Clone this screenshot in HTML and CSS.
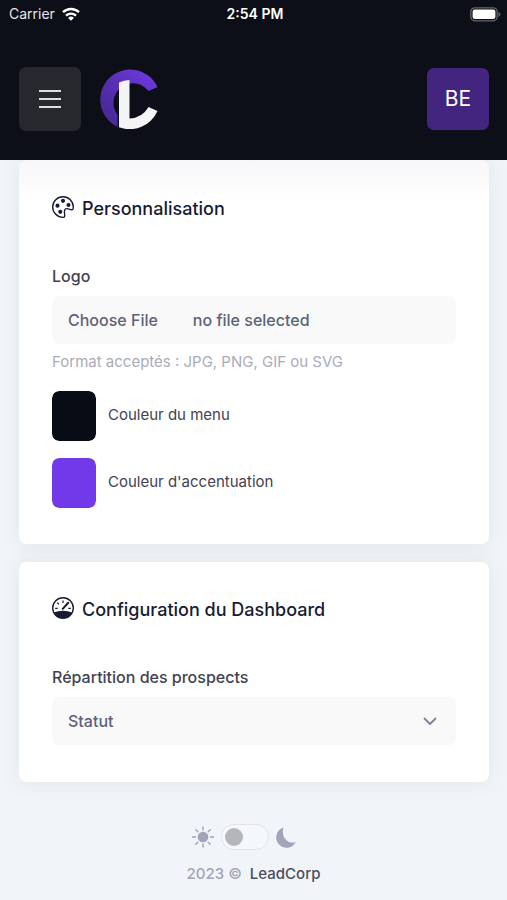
FILE: index.html
```html
<!DOCTYPE html>
<html lang="fr">
<head>
<meta charset="utf-8">
<meta name="viewport" content="width=device-width, initial-scale=1">
<title>LeadCorp</title>
<link rel="stylesheet" href="styles.css">
</head>
<body>
<header class="header">
  <div class="status">
    <div class="carrier">
      <span>Carrier</span>
      <svg class="wifi" viewBox="0 0 18 14" aria-hidden="true"><g fill="none" stroke="currentColor" stroke-width="2.4"><path d="M1 5.2a11.5 11.5 0 0 1 16 0"/><path d="M4 8.6a7.2 7.2 0 0 1 10 0"/></g><path fill="currentColor" d="M9 13.8 6.1 10.9a4.1 4.1 0 0 1 5.8 0z"/></svg>
    </div>
    <time class="clock">2:54 PM</time>
    <svg class="battery" viewBox="0 0 31 15" aria-hidden="true"><rect x=".8" y=".8" width="26.4" height="13" rx="4" fill="none" stroke="#66676c" stroke-width="1.3"/><rect x="2.6" y="2.6" width="22.8" height="9.4" rx="2.2" fill="#fff"/><path fill="#66676c" d="M28.5 5q1.8.8 1.8 2.4t-1.8 2.4z"/></svg>
  </div>
  <div class="bar">
    <button class="square menu" type="button" aria-label="Menu">
      <svg viewBox="0 0 22 20" aria-hidden="true"><path d="M0 2h22M0 10h22M0 18h22" stroke="#dedee1" stroke-width="2"/></svg>
    </button>
    <a class="logo" href="#" aria-label="LeadCorp">
      <svg viewBox="0 0 60 60" aria-hidden="true">
        <defs><linearGradient id="violet" x1="0" y1="1" x2="1" y2="0"><stop offset=".2" stop-color="#4b2a9b"/><stop offset="1" stop-color="#713ae4"/></linearGradient></defs>
        <path fill="url(#violet)" d="M58.500 18A30 30 0 1 0 18.500 57.700V45.800A19.500 19.500 0 1 1 49.500 22z"/>
        <path fill="#f4f4f6" d="M20 13.500Q25 11 30.500 11V49.400Q43 49.200 49.500 38L58.500 42A30.500 30.500 0 0 1 20 58.300z"/>
      </svg>
    </a>
    <button class="square avatar" type="button">BE</button>
  </div>
</header>

<main class="content">
  <section class="card card-first">
    <h2 class="title">
      <svg viewBox="0 0 16 16" fill="currentColor" aria-hidden="true"><path d="M8 5a1.5 1.5 0 1 0 0-3 1.5 1.5 0 0 0 0 3m4 3a1.5 1.5 0 1 0 0-3 1.5 1.5 0 0 0 0 3M5.500 7a1.500 1.500 0 1 1-3 0 1.500 1.500 0 0 1 3 0m.5 6a1.500 1.500 0 1 0 0-3 1.500 1.500 0 0 0 0 3"/><path d="M16 8c0 3.150-1.866 2.585-3.567 2.070C11.420 9.763 10.465 9.473 10 10c-.603.683-.475 1.819-.351 2.920C9.826 14.495 9.996 16 8 16a8 8 0 1 1 8-8m-8 7c.611 0 .654-.171.655-.176.078-.146.124-.464.070-1.119-.014-.168-.037-.370-.061-.591-.052-.464-.112-1.005-.118-1.462-.010-.707.083-1.610.704-2.314.369-.417.845-.578 1.272-.618.404-.038.812.026 1.160.104.343.077.702.186 1.025.284l.028.008c.346.105.658.199.953.266.653.148.904.083.991.024C14.717 9.380 15 9.161 15 8a7 7 0 1 0-7 7"/></svg>
      <span>Personnalisation</span>
    </h2>
    <label class="label" for="logo-file">Logo</label>
    <label class="field file">
      <input class="file-input" id="logo-file" type="file" accept=".jpg,.png,.gif,.svg">
      <span>Choose File</span>
      <span>no file selected</span>
    </label>
    <p class="hint">Format acceptés : JPG, PNG, GIF ou SVG</p>
    <div class="color-row">
      <input class="swatch" id="menu-color" type="color" value="#080c14">
      <label for="menu-color">Couleur du menu</label>
    </div>
    <div class="color-row">
      <input class="swatch" id="accent-color" type="color" value="#7239ea">
      <label for="accent-color">Couleur d'accentuation</label>
    </div>
  </section>

  <section class="card">
    <h2 class="title">
      <svg viewBox="0 0 16 16" fill="none" stroke="currentColor" aria-hidden="true"><circle cx="8" cy="8" r="7.500"/><path d="M8 2.500v1.800M3.900 4.200l1.100 1.100M2.300 8.300h1.800M11.900 8.300h1.800" stroke-width=".9"/><path d="M7.800 8.600 11.800 4.200" stroke-width="1.500" stroke-linecap="round"/><path fill="currentColor" stroke="none" d="M1.200 11.300Q8 8.800 14.800 11.300A7.700 7.700 0 0 1 1.200 11.300z"/></svg>
      <span>Configuration du Dashboard</span>
    </h2>
    <label class="label" for="repartition">Répartition des prospects</label>
    <div class="select-wrap">
      <select class="field select" id="repartition"><option>Statut</option></select>
      <svg class="chevron" viewBox="0 0 14 9" aria-hidden="true"><path d="m1.500 1.500 5.500 5.500 5.500-5.500" fill="none" stroke="#7e8299" stroke-width="1.800" stroke-linecap="round" stroke-linejoin="round"/></svg>
    </div>
  </section>
</main>

<footer class="footer">
  <div class="theme">
    <svg class="sun" viewBox="0 0 22 22" aria-hidden="true"><circle cx="11" cy="11" r="5.300" fill="#a1a5b7"/><path d="M11 1v3M11 18v3M.5 11h3M18.500 11h3M3.800 3.800l2 2M16.200 16.200l2 2M18.200 3.800l-2 2M5.800 16.200l-2 2" stroke="#a1a5b7" stroke-width="1.400" stroke-linecap="round"/></svg>
    <input class="switch" type="checkbox" aria-label="Mode sombre">
    <svg class="moon" viewBox="0 0 20 21" aria-hidden="true"><path fill="#a1a5b7" d="M7.500.4A10.400 10.400 0 1 0 19.800 15.200C12 17.500 4.500 10 7.500.4z"/></svg>
  </div>
  <p class="copy"><span>2023 ©</span><a href="#">LeadCorp</a></p>
</footer>
</body>
</html>
```
FILE: styles.css
```css
* {
  box-sizing: border-box;
}

body {
  margin: 0;
  background: #f1f5f9;
  color: #3f4254;
  font-family: Inter, "Liberation Sans", sans-serif;
  font-size: 16px;
  line-height: 24px;
}

button,
select {
  font: inherit;
}

.header {
  position: relative;
  height: 160px;
  background: #0c0f17;
  color: #fff;
}

.status {
  display: grid;
  grid-template-columns: 1fr auto 1fr;
  align-items: center;
  height: 28px;
  padding: 0 6px 0 9px;
  font-size: 14px;
}

.carrier {
  display: flex;
  align-items: center;
  gap: 7px;
  color: #e6e6e8;
}

.wifi {
  width: 18px;
  height: 14px;
  color: #fff;
}

.clock {
  font-weight: 600;
}

.battery {
  justify-self: end;
  width: 31px;
  height: 15px;
}

.bar {
  display: flex;
  align-items: center;
  padding: 39px 18px 0 19px;
}

.square {
  display: flex;
  align-items: center;
  justify-content: center;
  width: 62px;
  height: 62px;
  padding: 0;
  border: 0;
  border-radius: 7px;
}

.menu {
  height: 64px;
  background: #27272e;
}

.menu svg {
  width: 22px;
  height: 20px;
}

.logo {
  margin-left: 18px;
}

.logo svg {
  display: block;
  width: 60px;
  height: 60px;
}

.avatar {
  margin-left: auto;
  background: #43247f;
  color: #fff;
  font-size: 21px;
}

.content {
  display: grid;
  gap: 18px;
  padding: 0 18px 0 19px;
}

.card {
  padding: 34px 33px 33px;
  border-radius: 8px;
  background: #fff;
  box-shadow: 0 0 20px 2px rgb(76 87 100 / 8%);
}

.card-first {
  padding-top: 35px;
  background: linear-gradient(#f7f7f9, #fff 44px);
}

.title {
  display: flex;
  align-items: center;
  gap: 8px;
  margin: 0 0 41px;
  color: #181c32;
  font-size: 18px;
  font-weight: 500;
  line-height: 28px;
}

.title svg {
  flex: none;
  width: 22px;
  height: 22px;
  margin-bottom: 4px;
}

.label {
  display: block;
  margin-bottom: 8px;
  font-weight: 500;
}

.field {
  width: 100%;
  height: 48px;
  padding: 0 16px;
  border: 0;
  border-radius: 7px;
  background: #f9f9f9;
  color: #5e6278;
  font-weight: 500;
}

.file {
  position: relative;
  display: flex;
  align-items: center;
  gap: 35px;
}

.file-input {
  position: absolute;
  inset: 0;
  width: 100%;
  opacity: 0;
}

.hint {
  margin: 6px 0 17px;
  color: #a9acb8;
  font-size: 15px;
}

.color-row {
  display: flex;
  align-items: center;
  gap: 12px;
  margin-bottom: 17px;
  font-size: 15px;
}

.color-row label {
  padding-bottom: 2px;
}

.color-row:last-child {
  margin-bottom: 3px;
}

.swatch {
  width: 44px;
  height: 50px;
  padding: 0;
  border: 0;
  border-radius: 7px;
  background: none;
  overflow: hidden;
}

.swatch::-webkit-color-swatch-wrapper {
  padding: 0;
}

.swatch::-webkit-color-swatch {
  border: 0;
  border-radius: 7px;
}

.select-wrap {
  position: relative;
  display: grid;
  margin-bottom: 4px;
}

.select {
  appearance: none;
}

.chevron {
  position: absolute;
  top: 20px;
  right: 19px;
  width: 14px;
  height: 9px;
  pointer-events: none;
}

.footer {
  padding: 42px 0 10px;
}

.theme {
  display: flex;
  align-items: center;
  justify-content: center;
  gap: 7px;
  margin-right: 20px;
}

.sun {
  width: 22px;
  height: 22px;
}

.moon {
  width: 20px;
  height: 21px;
}

.switch {
  display: flex;
  align-items: center;
  appearance: none;
  width: 48px;
  height: 26px;
  margin: 0;
  padding: 0 3px;
  border: 1px solid #e1e3e8;
  border-radius: 13px;
  background: #f5f8fa;
}

.switch::before {
  content: "";
  width: 18px;
  height: 18px;
  border-radius: 50%;
  background: #b5b6b9;
}

.switch:checked::before {
  margin-left: auto;
}

.copy {
  display: flex;
  justify-content: center;
  gap: 8px;
  margin: 12px 0 0;
  color: #a1a5b7;
  font-size: 15px;
  font-weight: 500;
}

.copy a {
  color: #4b4e60;
  text-decoration: none;
}
```
